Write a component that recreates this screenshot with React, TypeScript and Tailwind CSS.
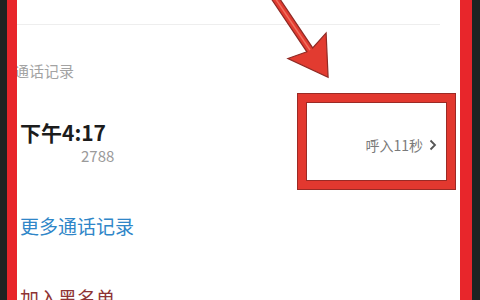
import React from "react";

const font = { fontFamily: '"Noto Sans CJK SC", "Noto Sans", sans-serif' };

function Arrow() {
  return (
    <svg className="absolute inset-0 pointer-events-none" width="480" height="300" viewBox="0 0 480 300">
      <polygon
        points="270.1,-3 275.9,-7 312.7,47.9 326.1,32.9 328.1,77.3 287.9,58.5 306.9,51.8"
        fill="#e23b30"
        stroke="#8f2a24"
        strokeWidth="1.2"
        strokeLinejoin="miter"
      />
      <polyline points="273,-5 310,50" stroke="#f0705f" strokeWidth="1.5" fill="none" />
    </svg>
  );
}

export default function App() {
  return (
    <div className="relative flex w-[480px] h-[300px] overflow-hidden bg-white" style={font}>
      <div className="w-[7px] shrink-0 bg-[#1f2322]" />
      <div className="w-[10px] shrink-0 bg-[#e8262b]" />

      <div className="relative flex-1 flex flex-col overflow-hidden">
        <div className="h-[25px] shrink-0 border-b border-[#eeeeee] mr-[20px]" />

        <div className="mt-[36px] -ml-[3px] text-[15px] leading-[20px] text-[#a3a3a3]">通话记录</div>

        <div className="mt-[37px] flex items-center pr-[23px]">
          <div className="flex flex-col pl-[3px]">
            <div className="text-[21px] leading-[28px] font-bold text-[#1c1c1c]">下午4:17</div>
            <div className="text-[15px] leading-[20px] text-[#9a9a9a] ml-[61px]">2788</div>
          </div>
          <div className="ml-auto mt-[6px] flex items-center gap-[6px] text-[14px] leading-[20px] text-[#7a7a7a]">
            <span>呼入11秒</span>
            <svg width="8" height="12" viewBox="0 0 8 12">
              <path d="M1.5 1.5 L6 6 L1.5 10.5" stroke="#555" strokeWidth="1.8" fill="none" />
            </svg>
          </div>
        </div>

        <div className="mt-[47px] pl-[3px] text-[19px] leading-[26px] text-[#2f86c8]">更多通话记录</div>
        <div className="mt-[46px] pl-[3px] text-[19px] leading-[26px] text-[#8e3434]">加入黑名单</div>

        <div className="absolute left-[281px] top-[94px] w-[157px] h-[95px] border-[8px] border-[#e2382f] shadow-[0_0_0_1px_#9b2a25,inset_0_0_0_1px_#9b2a25]" />
      </div>

      <div className="w-[12px] shrink-0 bg-[#e8262b]" />
      <div className="w-[8px] shrink-0 bg-[#1f2322]" />

      <Arrow />
    </div>
  );
}
